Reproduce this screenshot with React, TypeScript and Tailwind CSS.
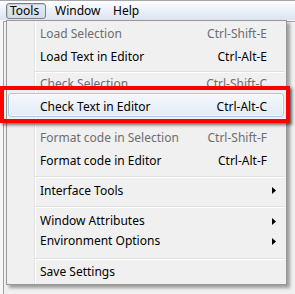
import React from "react";

type Item = {
  label: string;
  shortcut?: string;
  disabled?: boolean;
  arrow?: boolean;
  h: string;
};

function Arrow() {
  return (
    <svg width="4" height="7" viewBox="0 0 4 7" className="block">
      <path d="M0 0L4 3.5L0 7Z" fill="#000" />
    </svg>
  );
}

function Row({ label, shortcut, disabled, arrow, h }: Item) {
  return (
    <div
      className={`${h} ml-[1px] mr-[2px] flex items-center pl-[32px] ${arrow ? "pr-[8px]" : "pr-[17px]"} ${
        disabled ? "text-[#6d6d6d]" : "text-black"
      }`}
    >
      <span className="flex-1 whitespace-nowrap leading-[16px]">{label}</span>
      {shortcut && <span className="whitespace-nowrap leading-[16px]">{shortcut}</span>}
      {arrow && <Arrow />}
    </div>
  );
}

function Sep({ h, pt }: { h: string; pt: string }) {
  return (
    <div className={`${h} ${pt} ml-[28px] mr-[2px]`}>
      <div className="h-[1px] bg-[#e0e0e0]" />
      <div className="h-[1px] bg-white" />
    </div>
  );
}

export default function App() {
  return (
    <div className="w-[295px] h-[294px] relative overflow-hidden bg-white font-['Noto_Sans',sans-serif] text-[12px]">
      {/* menu bar */}
      <div className="h-[20px] border-t border-[#a7a7a7] bg-linear-to-b from-[#fdfeff] to-[#dbe4f1] flex items-start pl-[6px] pt-[2px] text-black">
        <div className="w-[40px] h-[16px] rounded-[3px] border border-[#7c8188] bg-linear-to-b from-[#e4ebf4] to-[#d3dde9] pl-[3px] leading-[14px] shadow-[inset_1px_1px_1px_rgba(0,0,0,0.12)]">
          Tools
        </div>
        <div className="w-[58px] ml-[9px] leading-[16px]">Window</div>
        <div className="leading-[16px]">Help</div>
      </div>
      {/* window body */}
      <div className="h-[274px] pt-[1px] pl-[3px] bg-[#f7f7f7]">
        <div className="h-full border-l border-t border-[#a0a0a0] bg-[#f0f0f0]" />
      </div>

      {/* dropdown menu */}
      <div className="absolute left-[6px] top-[20px] w-[281px] h-[265px] border border-[#979797] bg-[#f0f0f0] shadow-[3px_3px_3px_rgba(0,0,0,0.35)]">
        <div className="absolute left-[27px] top-0 bottom-0 w-[1px] bg-[#e2e3e3]" />
        <div className="absolute left-[28px] top-0 bottom-0 w-[1px] bg-white" />
        <div className="relative flex flex-col pt-[2px]">
          <Row h="h-[22px]" label="Load Selection" shortcut="Ctrl-Shift-E" disabled />
          <Row h="h-[23px]" label="Load Text in Editor" shortcut="Ctrl-Alt-E" />
          <Sep h="h-[6px]" pt="pt-[3px]" />
          <Row h="h-[19px]" label="Check Selection" shortcut="Ctrl-Shift-C" disabled />
          <div className="h-[24px] ml-[1px] mr-[2px] rounded-[3px] border border-[#aec6e6] bg-linear-to-b from-[#f5f8fd] to-[#e2ebf7] shadow-[inset_0_0_0_1px_rgba(255,255,255,0.6)] flex items-start pt-[2px] pl-[31px] pr-[16px] text-black">
            <span className="flex-1 whitespace-nowrap leading-[21px]">Check Text in Editor</span>
            <span className="whitespace-nowrap leading-[21px]">Ctrl-Alt-C</span>
          </div>
          <Sep h="h-[10px]" pt="pt-[4px]" />
          <Row h="h-[22px]" label="Format code in Selection" shortcut="Ctrl-Shift-F" disabled />
          <Row h="h-[23px]" label="Format code in Editor" shortcut="Ctrl-Alt-F" />
          <Sep h="h-[8px]" pt="pt-[4px]" />
          <Row h="h-[21px]" label="Interface Tools" arrow />
          <Sep h="h-[10px]" pt="pt-[5px]" />
          <Row h="h-[20px]" label="Window Attributes" arrow />
          <Row h="h-[20px]" label="Environment Options" arrow />
          <Sep h="h-[11px]" pt="pt-[7px]" />
          <Row h="h-[20px]" label="Save Settings" />
        </div>
      </div>

      {/* red highlight rectangle */}
      <div className="absolute left-0 top-[86px] w-[290px] h-[37px] border-[4px] border-[#fe0000] shadow-[2px_2px_3px_rgba(0,0,0,0.55)]" />
    </div>
  );
}
